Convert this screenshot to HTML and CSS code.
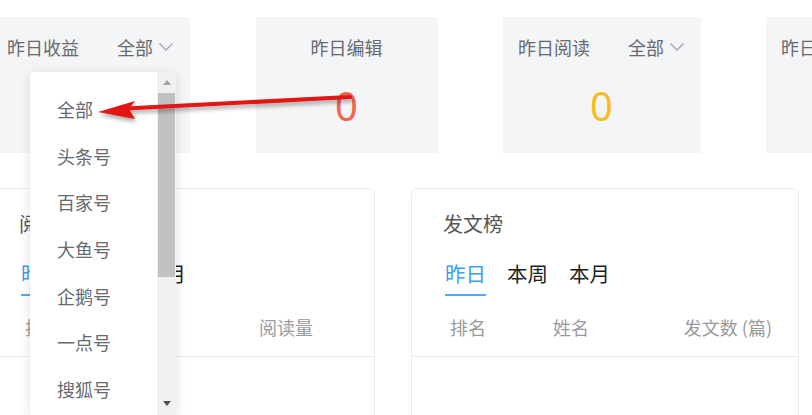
FILE: index.html
```html
<!DOCTYPE html>
<html lang="zh-CN">
<head>
<meta charset="utf-8">
<title>数据概览</title>
<link rel="stylesheet" href="styles.css">
</head>
<body>
<div class="page">
  <div class="stats">
    <div class="stat stat-wide">
      <div class="stat-head">
        <span class="stat-label">昨日收益</span>
        <span class="stat-filter">全部<svg class="chev" viewBox="0 0 16 10" width="16" height="10"><polyline points="1.5,1.5 8,8 14.5,1.5" fill="none" stroke="#a0a4aa" stroke-width="1.3"/></svg></span>
      </div>
      <div class="stat-num num-green">0</div>
    </div>
    <div class="stat stat-narrow">
      <div class="stat-head center">
        <span class="stat-label">昨日编辑</span>
      </div>
      <div class="stat-num num-red">0</div>
    </div>
    <div class="stat stat-wide">
      <div class="stat-head">
        <span class="stat-label">昨日阅读</span>
        <span class="stat-filter">全部<svg class="chev" viewBox="0 0 16 10" width="16" height="10"><polyline points="1.5,1.5 8,8 14.5,1.5" fill="none" stroke="#a0a4aa" stroke-width="1.3"/></svg></span>
      </div>
      <div class="stat-num num-yellow">0</div>
    </div>
    <div class="stat stat-wide">
      <div class="stat-head">
        <span class="stat-label">昨日点赞</span>
      </div>
    </div>
  </div>

  <div class="boards">
    <div class="board">
      <div class="board-title">阅读榜</div>
      <div class="tabs">
        <span class="tab active">昨日</span>
        <span class="tab">本周</span>
        <span class="tab">本月</span>
      </div>
      <div class="thead thead-read">
        <span class="col-rank">排名</span>
        <span class="col-name">姓名</span>
        <span class="col-val">阅读量</span>
      </div>
    </div>
    <div class="board">
      <div class="board-title">发文榜</div>
      <div class="tabs">
        <span class="tab active">昨日</span>
        <span class="tab">本周</span>
        <span class="tab">本月</span>
      </div>
      <div class="thead thead-post">
        <span class="col-rank">排名</span>
        <span class="col-name">姓名</span>
        <span class="col-val">发文数 (篇)</span>
      </div>
    </div>
  </div>
</div>

<div class="dropdown">
  <ul class="menu">
    <li>全部</li>
    <li>头条号</li>
    <li>百家号</li>
    <li>大鱼号</li>
    <li>企鹅号</li>
    <li>一点号</li>
    <li>搜狐号</li>
  </ul>
  <div class="scrollbar">
    <div class="sb-up"></div>
    <div class="sb-thumb"></div>
    <div class="sb-fill"></div>
    <div class="sb-down"></div>
  </div>
</div>

<svg class="pointer" width="812" height="415" viewBox="0 0 812 415">
  <defs>
    <filter id="sh" x="-10%" y="-50%" width="120%" height="200%">
      <feDropShadow dx="1" dy="3" stdDeviation="2" flood-color="#000" flood-opacity="0.35"/>
    </filter>
  </defs>
  <g filter="url(#sh)">
    <line x1="126" y1="108.5" x2="350" y2="97" stroke="#e31414" stroke-width="4.2" stroke-linecap="round"/>
    <polygon points="98,112 135,101 129,109 135,119" fill="#e31414"/>
  </g>
</svg>
</body>
</html>
```

FILE: styles.css
```css
* { box-sizing: border-box; }
html, body { margin: 0; padding: 0; }
body {
  width: 812px;
  height: 415px;
  overflow: hidden;
  background: #fff;
  font-family: "Noto Sans CJK SC", "Noto Sans", sans-serif;
  color: #333;
  position: relative;
}
.page { width: 812px; overflow: hidden; height: 415px; }

.stats {
  display: flex;
  gap: 65px;
  margin-left: -8px;
  padding-top: 17px;
}
.stat {
  flex: none;
  height: 136px;
  background: #f4f5f7;
  padding: 17px 16px 0 15px;
}
.stat-wide { width: 198px; }
.stat-narrow { width: 182px; margin-left: 1px; }
.stat-head {
  display: flex;
  justify-content: space-between;
  align-items: center;
  height: 26px;
  font-size: 18px;
  color: #666a70;
  white-space: nowrap;
}
.stat-head.center { justify-content: center; }
.stat-filter { display: flex; align-items: center; gap: 5px; }
.chev { display: block; }
.stat-num {
  margin-top: 28px;
  text-align: center;
  font-family: "Noto Sans", sans-serif;
  font-size: 40px;
  line-height: 36px;
  font-weight: 400;
}
.num-green { color: #67c23a; }
.num-red { color: #f4664e; }
.num-yellow { color: #f9bb22; }

.boards {
  display: flex;
  gap: 36px;
  margin-left: -13px;
  margin-top: 35px;
}
.board {
  flex: none;
  width: 388px;
  height: 260px;
  border: 1px solid #e8ebf0;
  border-radius: 6px;
  padding-top: 21px;
}
.board-title {
  padding-left: 31px;
  font-size: 20px;
  line-height: 28px;
  color: #555;
}
.tabs {
  display: flex;
  gap: 21px;
  padding-left: 33px;
  margin-top: 21px;
}
.tab {
  font-size: 20.5px;
  line-height: 28px;
  padding-bottom: 7px;
  color: #1f1f1f;
  border-bottom: 2px solid transparent;
}
.tab.active {
  color: #3f9ee6;
  border-bottom-color: #52ade9;
}
.thead {
  display: flex;
  align-items: center;
  margin-top: 19px;
  padding-bottom: 17px;
  border-bottom: 1px solid #e8ebf0;
  font-size: 18px;
  line-height: 24px;
  color: #9a9a9a;
}
.thead-post { padding-left: 38px; padding-right: 26px; }
.thead-post .col-rank { width: 103px; }
.thead-post .col-name { flex: 1; }
.thead-read { padding-left: 37px; padding-right: 61px; }
.thead-read .col-rank { width: 103px; }
.thead-read .col-name { flex: 1; }

.dropdown {
  position: absolute;
  left: 30px;
  top: 72px;
  width: 146px;
  height: 343px;
  background: #fff;
  border-radius: 4px 0 0 0;
  box-shadow: 0 2px 12px rgba(0, 0, 0, 0.12);
  display: flex;
}
.menu {
  list-style: none;
  margin: 0;
  padding: 14px 0 0 27px;
  flex: 1;
}
.menu li {
  height: 46.67px;
  line-height: 46.67px;
  font-size: 18px;
  color: #666a70;
}
.scrollbar {
  width: 19px;
  background: #f1f1f1;
  display: flex;
  flex-direction: column;
  align-items: center;
}
.sb-up, .sb-down {
  width: 0;
  height: 0;
  border-left: 4px solid transparent;
  border-right: 4px solid transparent;
}
.sb-up {
  margin-top: 8px;
  border-bottom: 5px solid #a3a3a3;
}
.sb-thumb {
  margin-top: 8px;
  width: 17px;
  height: 184px;
  background: #c1c1c1;
}
.sb-fill { flex: 1; }
.sb-down {
  margin-bottom: 9px;
  border-top: 5px solid #505050;
}

.pointer {
  position: absolute;
  left: 0;
  top: 0;
  pointer-events: none;
}
```
